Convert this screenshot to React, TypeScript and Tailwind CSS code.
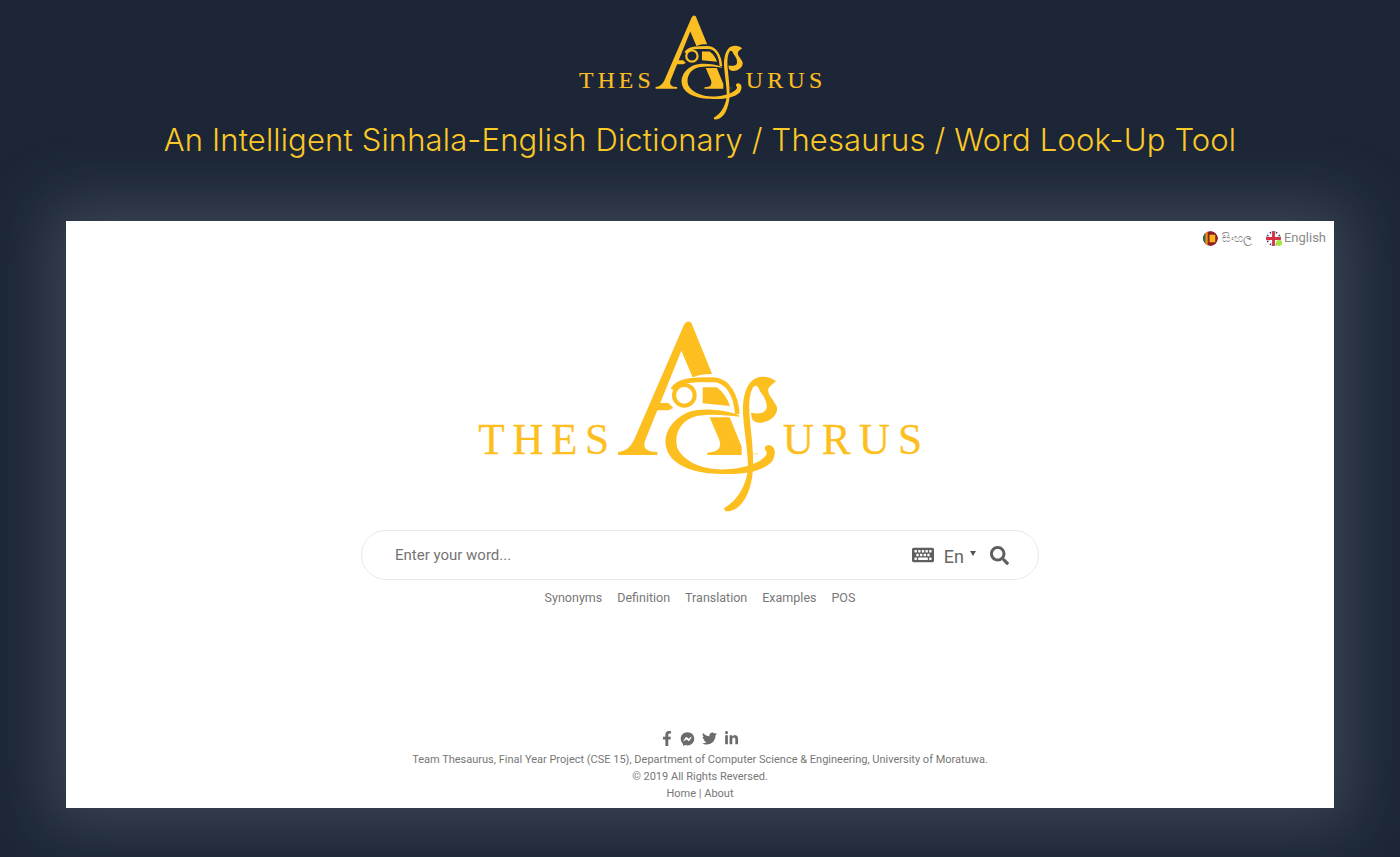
import { FaFacebookF, FaFacebookMessenger, FaTwitter, FaLinkedinIn, FaSearch, FaKeyboard } from "react-icons/fa";

const STEM =
  "M948 220 C930 202 890 200 872 222 C852 246 846 285 850 330 C854 380 862 420 864 470 C864 520 838 575 792 600 L796 610 C838 612 866 570 876 510 C884 460 876 400 870 340 C866 300 866 262 878 240 C885 228 895 232 900 250 C915 268 922 285 920 300 C915 318 895 318 873 314 L875 330 C880 345 900 348 920 340 C945 330 955 310 950 295 C938 270 922 262 925 242 C930 232 940 228 948 220 Z";
const BOWL =
  "M838 322 C790 304 720 298 680 314 C630 338 612 380 617 410 C625 470 700 495 770 497 C840 502 905 492 935 462 C952 435 945 412 925 411 C912 413 912 424 920 432 C924 448 880 480 800 484 C730 488 670 460 652 420 C640 375 665 335 710 324 C760 316 800 322 838 326 Z";

function Logo({ className, color, knock }: { className: string; color: string; knock: string }) {
  return (
    <svg viewBox="0 0 1440 645" className={className} fill={color}>
      <text x="55" y="438" fontFamily="'Liberation Serif', serif" fontSize="130" textLength="392" lengthAdjust="spacing" stroke={color} strokeWidth="0.8">THES</text>
      <text x="968" y="438" fontFamily="'Liberation Serif', serif" fontSize="130" textLength="418" lengthAdjust="spacing" stroke={color} strokeWidth="0.8">URUS</text>
      <path d="M672 50 Q682 34 694 44 L845 416 L845 441 L742 441 L742 434 Q790 432 778 396 L664 128 L556 396 Q542 432 592 432 L592 441 L474 441 L474 432 Q506 430 522 396 Z" />
      <path d="M632 328 C630 240 680 198 752 198 C815 200 848 260 848 328 Z" fill={knock} />
      <path d={STEM} fill={knock} stroke={knock} strokeWidth="14" />
      <path d={STEM} />
      <path d={BOWL} />
      <path d="M638 245 C655 215 700 215 760 215 C805 218 828 262 832 318" fill="none" stroke={color} strokeWidth="14" />
      <path d="M728 238 L770 238 Q798 258 810 294 L728 286 Z" />
      <circle cx="673" cy="262" r="31" fill={knock} stroke={color} strokeWidth="12" />
      <path d="M580 285 L625 285 L640 300 L625 307 L575 307 Z" />
      <rect x="880" y="436" width="14" height="3" opacity="0.6" />
    </svg>
  );
}

function SriLanka() {
  return (
    <svg viewBox="0 0 16 16" className="w-[15px] h-[15px] rounded-full">
      <circle cx="8" cy="8" r="8" fill="#8d2129" />
      <rect x="0" y="0" width="2.5" height="16" fill="#0a7a4a" />
      <rect x="2.5" y="0" width="2.5" height="16" fill="#f28c1e" />
      <rect x="7" y="4" width="6" height="8" fill="#f7b718" />
    </svg>
  );
}

function UK() {
  return (
    <span className="relative inline-block w-[15px] h-[15px]">
      <svg viewBox="0 0 16 16" className="w-[15px] h-[15px] rounded-full">
        <circle cx="8" cy="8" r="8" fill="#29306f" />
        <path d="M1 1L15 15M15 1L1 15" stroke="#fff" strokeWidth="3" />
        <path d="M8 0V16M0 8H16" stroke="#fff" strokeWidth="5" />
        <path d="M8 0V16M0 8H16" stroke="#d22f3f" strokeWidth="3" />
      </svg>
      <span className="absolute right-[-1px] bottom-[0px] w-[6px] h-[6px] bg-[#a5e83c] rounded-full" />
    </span>
  );
}

export default function App() {
  return (
    <div className="w-[1400px] h-[857px] overflow-hidden bg-[#1c2636] flex flex-col items-center">
      <Logo className="w-[263px] h-[118px] mt-[8px]" color="#fbbf24" knock="#1c2636" />
      <h1 className="mt-[-6px] text-[31px] leading-[40px] tracking-[0.15px] font-light text-[#fdca26] font-['Inter',sans-serif] whitespace-nowrap">
        An Intelligent Sinhala-English Dictionary / Thesaurus / Word Look-Up Tool
      </h1>
      <main className="mt-[61px] w-[1268px] h-[587px] bg-white shadow-[0_0_60px_18px_rgba(98,106,122,0.45)] flex flex-col items-center text-[#6f6f6f] font-['Roboto',sans-serif]">
        <div className="self-end flex items-center gap-[14px] pt-[8px] pr-[8px] text-[13px] leading-[18px] text-[#8a8a8a]">
          <span className="flex items-center gap-[4px]">
            <SriLanka />
            <span className="text-[11.5px] font-['Noto_Sans','DejaVu_Sans',sans-serif]">සිංහල</span>
          </span>
          <span className="flex items-center gap-[3px]">
            <UK />
            <span>English</span>
          </span>
        </div>
        <Logo className="w-[480px] h-[215px] mt-[61px]" color="#fdbf1f" knock="#ffffff" />
        <div className="mt-[7px] w-[678px] h-[50px] rounded-[25px] border border-[#e9e9e9] flex items-center pl-[33px] pr-[29px]">
          <span className="flex-1 text-[15px] text-[#757575]">Enter your word...</span>
          <FaKeyboard className="text-[#5f5f5f] w-[22px] h-[20px]" />
          <span className="ml-[10px] text-[18px] text-[#666] leading-none mt-[3px]">En</span>
          <span className="ml-[6px] w-0 h-0 border-l-[3px] border-r-[3px] border-t-[5px] border-l-transparent border-r-transparent border-t-[#555] mb-[3px]" />
          <FaSearch className="ml-[14px] text-[#5f5f5f] w-[19px] h-[19px]" />
        </div>
        <nav className="mt-[9px] flex gap-[15px] text-[12.5px] leading-[18px] text-[#777]">
          <span>Synonyms</span><span>Definition</span><span>Translation</span><span>Examples</span><span>POS</span>
        </nav>
        <div className="mt-auto mb-[6px] flex flex-col items-center text-[11px] leading-[17px] text-[#777]">
          <div className="flex items-center gap-[6px] mb-[5px] pr-[2px] text-[#6b6b6b]">
            <FaFacebookF className="w-[14px] h-[15px]" />
            <FaFacebookMessenger className="w-[15px] h-[14px]" />
            <FaTwitter className="w-[17px] h-[15px]" />
            <FaLinkedinIn className="w-[15px] h-[15px]" />
          </div>
          <p>Team Thesaurus, Final Year Project (CSE 15), Department of Computer Science &amp; Engineering, University of Moratuwa.</p>
          <p>© 2019 All Rights Reversed.</p>
          <p>Home | About</p>
        </div>
      </main>
    </div>
  );
}
